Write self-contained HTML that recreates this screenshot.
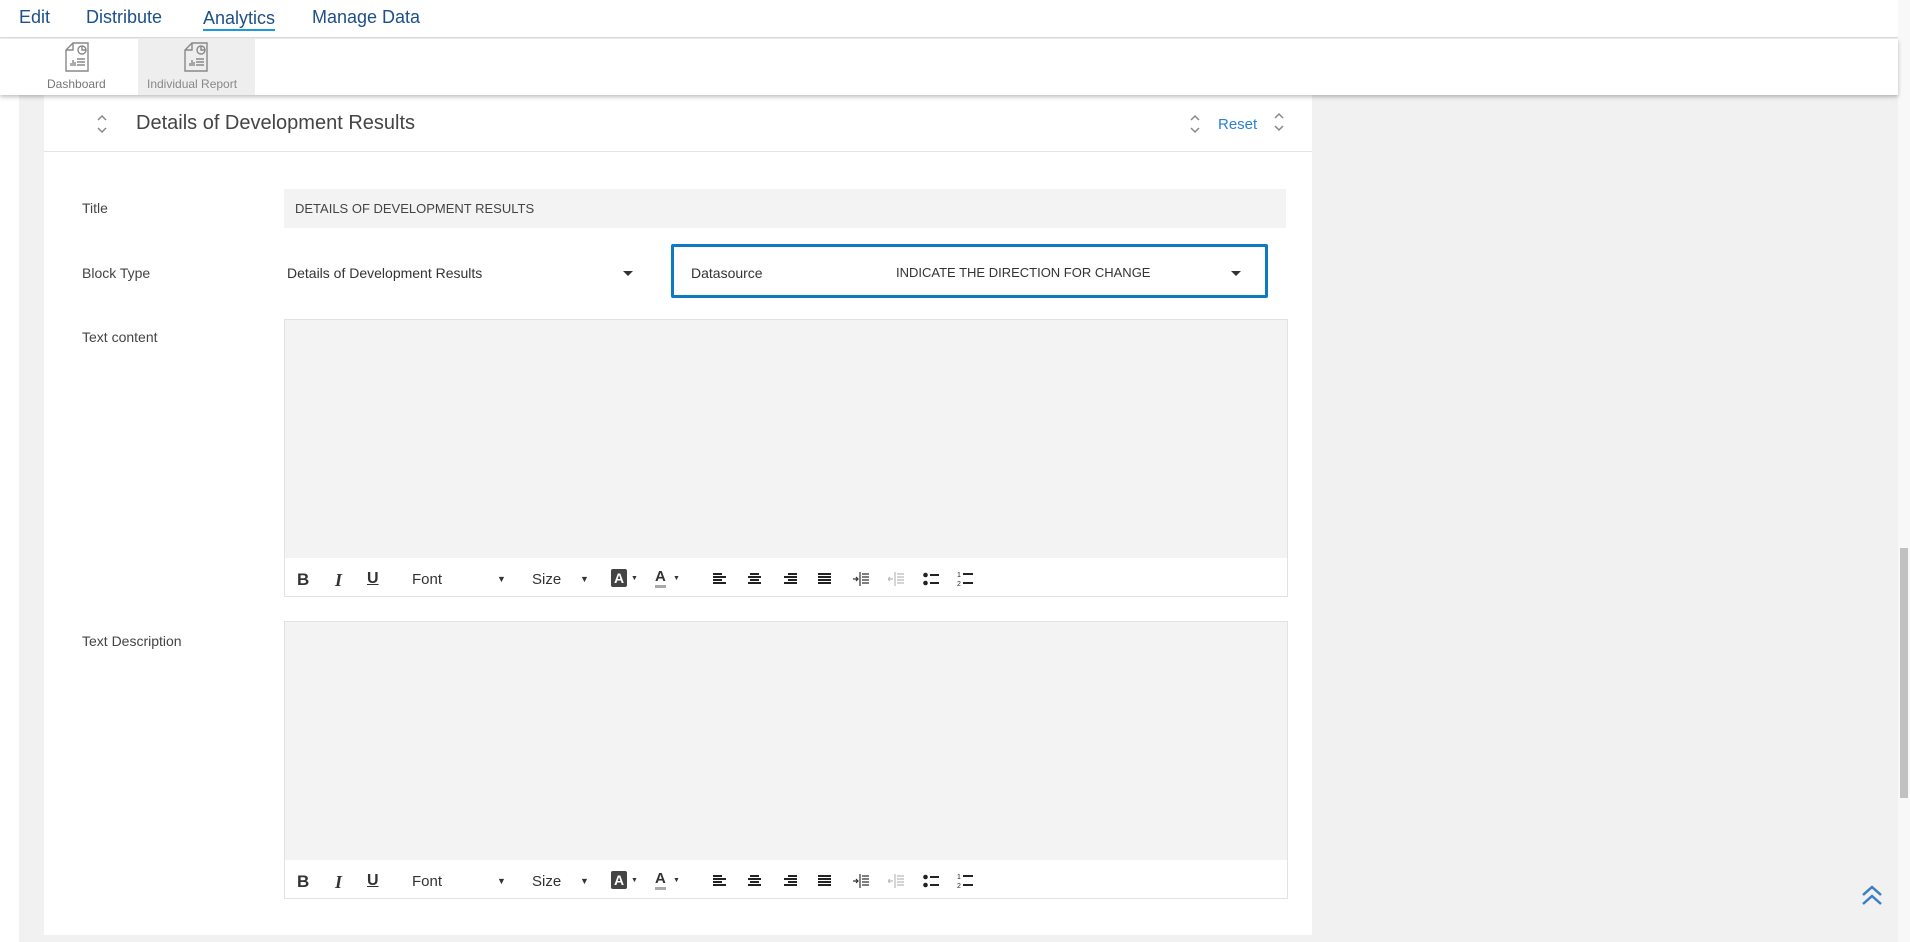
<!DOCTYPE html>
<html><head><meta charset="utf-8"><style>
*{box-sizing:border-box;margin:0;padding:0}
body{width:1910px;height:942px;overflow:hidden;background:#f1f1f1;font-family:"Liberation Sans",sans-serif;position:relative;color:#444}
.a{position:absolute}
.nav{left:0;top:0;width:1898px;height:38px;background:#fff;border-bottom:1px solid #ddd}
.nav span{position:absolute;top:7px;font-size:18px;color:#1c4f8c}
.tb{left:0;top:39px;width:1898px;height:56px;background:#fff;box-shadow:0 2px 4px rgba(0,0,0,.25)}
.lbl{font-size:14px;color:#444}
.tbar{position:absolute;left:0;right:0;bottom:0;height:38px;background:#fff;font-size:15px;color:#333}
.tbar .i{position:absolute;top:12px}
</style></head><body>
<div class="a" style="left:0;top:95px;width:19px;height:847px;background:#fff"></div>
<div class="a" style="left:44px;top:95px;width:1268px;height:840px;background:#fff"></div>
<div class="a" style="left:1898px;top:0;width:12px;height:942px;background:#f8f8f8"></div>
<div class="a" style="left:1900px;top:548px;width:8px;height:250px;background:#c1c1c1"></div>

<div class="a nav">
<span style="left:19px">Edit</span>
<span style="left:86px">Distribute</span>
<span style="left:203px;border-bottom:2px solid #1a9ad6;line-height:22px">Analytics</span>
<span style="left:312px">Manage Data</span>
</div>
<div class="a tb">
<div class="a" style="left:138px;top:0;width:117px;height:56px;background:#eee"></div>
<svg class="a" style="left:64px;top:3px" width="26" height="30" viewBox="0 0 26 30" fill="none" stroke="#888" stroke-width="1.4"><path d="M9 1H24V29H2V8Z M2 8H9V1"/><circle cx="18" cy="8" r="4"/><path d="M18 4V8H22"/><path d="M7 24V21M9 24V18M11 24V20M13 17H21M13 20H21M13 23H21"/></svg>
<svg class="a" style="left:183px;top:3px" width="26" height="30" viewBox="0 0 26 30" fill="none" stroke="#888" stroke-width="1.4"><path d="M9 1H24V29H2V8Z M2 8H9V1"/><circle cx="18" cy="8" r="4"/><path d="M18 4V8H22"/><path d="M7 24V21M9 24V18M11 24V20M13 17H21M13 20H21M13 23H21"/></svg>
<div class="a" style="left:47px;top:38px;font-size:12px;color:#777">Dashboard</div>
<div class="a" style="left:147px;top:38px;font-size:12px;color:#888">Individual Report</div>
</div>

<svg class="a" style="left:97px;top:114px" width="10" height="20" viewBox="0 0 10 20" fill="none" stroke="#888" stroke-width="1.5"><path d="M1 6L5 2L9 6M1 14L5 18L9 14"/></svg>
<div class="a" style="left:136px;top:112px;font-size:20px;color:#444">Details of Development Results</div>
<div class="a" style="left:44px;top:151px;width:1268px;height:1px;background:#e4e4e4"></div>
<svg class="a" style="left:1190px;top:114px" width="10" height="20" viewBox="0 0 10 20" fill="none" stroke="#888" stroke-width="1.5"><path d="M1 6L5 2L9 6M1 14L5 18L9 14"/></svg>
<div class="a" style="left:1218px;top:116px;font-size:15px;color:#2a7fd4">Reset</div>
<svg class="a" style="left:1274px;top:112px" width="10" height="20" viewBox="0 0 10 20" fill="none" stroke="#888" stroke-width="1.5"><path d="M1 6L5 2L9 6M1 14L5 18L9 14"/></svg>

<div class="a lbl" style="left:82px;top:200px">Title</div>
<div class="a" style="left:284px;top:189px;width:1002px;height:39px;background:#f3f3f3;font-size:13px;color:#444;padding:12px 11px">DETAILS OF DEVELOPMENT RESULTS</div>
<div class="a lbl" style="left:82px;top:265px">Block Type</div>
<div class="a" style="left:287px;top:265px;font-size:14px;color:#333">Details of Development Results</div>
<div class="a" style="left:623px;top:271px;border:5px solid transparent;border-top:5px solid #333"></div>
<div class="a" style="left:671px;top:244px;width:597px;height:54px;border:3px solid #0e7abf;border-radius:2px"></div>
<div class="a" style="left:691px;top:265px;font-size:14px;color:#333">Datasource</div>
<div class="a" style="left:896px;top:265px;font-size:13px;color:#333">INDICATE THE DIRECTION FOR CHANGE</div>
<div class="a" style="left:1231px;top:271px;border:5px solid transparent;border-top:5px solid #333"></div>

<div class="a lbl" style="left:82px;top:329px">Text content</div>
<div class="a lbl" style="left:82px;top:633px">Text Description</div>

<div class="a" style="left:284px;top:319px;width:1004px;height:278px;border:1px solid #e2e2e2;background:#f3f3f3">
<div class="tbar" id="t1"></div></div>
<div class="a" style="left:284px;top:621px;width:1004px;height:278px;border:1px solid #e2e2e2;background:#f3f3f3">
<div class="tbar" id="t2"></div></div>

<svg class="a" style="left:1860px;top:884px" width="24" height="22" viewBox="0 0 24 22" fill="none" stroke="#3a7fc4" stroke-width="2.5"><path d="M3 11L12 3L21 11M3 20L12 12L21 20"/></svg>
<script>
var h='<b class="i" style="left:12px;font-size:17px">B</b><i class="i" style="left:50px;font-family:Liberation Serif;font-weight:bold;font-size:18px">I</i><u class="i" style="left:82px;font-weight:bold;font-size:16px">U</u><span class="i" style="left:127px;top:13px">Font</span><span class="i" style="left:212px;font-size:9px;top:16px">&#9660;</span><span class="i" style="left:247px;top:13px">Size</span><span class="i" style="left:295px;font-size:9px;top:16px">&#9660;</span><span class="i" style="left:326px;top:11px;background:#444;color:#fff;font-weight:bold;font-size:14px;padding:1px 3px;border-radius:2px">A</span><span class="i" style="left:346px;font-size:7px;top:17px">&#9660;</span><span class="i" style="left:370px;top:11px;font-weight:bold;font-size:15px;border-bottom:3px solid #aaa;line-height:16px">A</span><span class="i" style="left:388px;font-size:7px;top:17px">&#9660;</span>';
var xs=[428,463,499,533];var als=["M0 1H9M0 4H13M0 7H9M0 10H13","M2 1H11M0 4H13M2 7H11M0 10H13","M4 1H13M0 4H13M4 7H13M0 10H13","M0 1H13M0 4H13M0 7H13M0 10H13"];
for(var k=0;k<4;k++)h+='<svg class="i" style="left:'+xs[k]+'px;top:15px" width="14" height="12"><path d="'+als[k]+'" stroke="#222" stroke-width="2"/></svg>';
h+='<svg class="i" style="left:568px;top:14px" width="16" height="14"><path d="M0 7H5M3 5L5 7L3 9M7 0V14M9 2H16M9 5H16M9 8H16M9 11H16" stroke="#333" stroke-width="1.2" fill="none"/></svg>';
h+='<svg class="i" style="left:603px;top:14px" width="16" height="14"><path d="M0 7H5M2 5L0 7L2 9M7 0V14M9 2H16M9 5H16M9 8H16M9 11H16" stroke="#bbb" stroke-width="1.2" fill="none"/></svg>';
h+='<svg class="i" style="left:638px;top:14px" width="16" height="14"><circle cx="2.5" cy="3" r="2.3" fill="#222"/><circle cx="2.5" cy="11" r="2.3" fill="#222"/><path d="M7 3H16M7 11H16" stroke="#222" stroke-width="2"/></svg>';
h+='<svg class="i" style="left:672px;top:13px" width="16" height="15"><text x="0" y="6" font-size="7" fill="#222">1</text><text x="0" y="15" font-size="7" fill="#222">2</text><path d="M6 3H16M6 12H16" stroke="#222" stroke-width="2"/></svg>';
document.getElementById('t1').innerHTML=h;document.getElementById('t2').innerHTML=h;
</script>
</body></html>
